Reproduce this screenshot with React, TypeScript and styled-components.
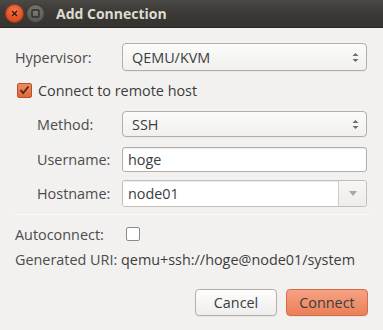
import React from 'react';
import styled, { createGlobalStyle } from 'styled-components';

const GlobalStyle = createGlobalStyle`
  html, body {
    margin: 0;
    padding: 0;
    background: #f2f1f0;
  }
  * { box-sizing: border-box; }
`;

const Window = styled.div`
  width: 383px;
  height: 330px;
  background: #f2f1f0;
  font-family: 'Open Sans', 'DejaVu Sans', sans-serif;
  font-size: 14.4px;
  color: #3c3c3c;
  overflow: hidden;
`;

const TitleBar = styled.div`
  height: 28px;
  display: flex;
  align-items: center;
  padding-left: 5px;
  gap: 2px;
  background: linear-gradient(#4a4945, #3c3b37 40%, #34332f);
  border-bottom: 1px solid #2a2925;
`;

const WinButton = styled.div<{ $close?: boolean }>`
  width: 19px;
  height: 19px;
  border-radius: 50%;
  display: flex;
  align-items: center;
  justify-content: center;
  background: ${(p) =>
    p.$close
      ? 'radial-gradient(circle at 50% 35%, #f27a51, #df4a20 70%)'
      : 'radial-gradient(circle at 50% 35%, #7e7d78, #5a5954 70%)'};
  border: 1px solid ${(p) => (p.$close ? '#a8391a' : '#3a3935')};
`;

const Title = styled.div`
  margin-left: 9px;
  font-weight: bold;
  font-size: 14px;
  color: #dfdbd2;
`;

const Content = styled.div`
  padding: 15px 15px 0 15px;
  display: flex;
  flex-direction: column;
`;

const Row = styled.div<{ $h: number; $mt?: number; $indent?: number }>`
  display: flex;
  align-items: center;
  height: ${(p) => p.$h}px;
  margin-top: ${(p) => p.$mt ?? 0}px;
  padding-left: ${(p) => p.$indent ?? 0}px;
`;

const Label = styled.div<{ $w: number }>`
  width: ${(p) => p.$w}px;
  flex-shrink: 0;
  color: #4c4c4c;
`;

const Combo = styled.div`
  flex: 1;
  height: 100%;
  margin-right: 1px;
  display: flex;
  align-items: center;
  justify-content: space-between;
  padding: 0 7px 0 9px;
  border: 1px solid #b3afa8;
  border-radius: 4px;
  background: linear-gradient(#fbfbfa, #f1f0ef);
  box-shadow: 0 1px 0 rgba(0, 0, 0, 0.04);
  color: #3c3c3c;
`;

const Entry = styled.div`
  flex: 1;
  height: 100%;
  margin-right: 1px;
  display: flex;
  align-items: center;
  padding-left: 5px;
  border: 1px solid #b3afa8;
  border-radius: 3px;
  background: #ffffff;
  box-shadow: inset 0 1px 1px rgba(0, 0, 0, 0.08);
  color: #3c3c3c;
`;

const ComboEntry = styled.div`
  flex: 1;
  height: 100%;
  margin-right: 1px;
  display: flex;
  border: 1px solid #c2beb7;
  border-radius: 3px;
  overflow: hidden;
`;

const ComboText = styled.div`
  flex: 1;
  display: flex;
  align-items: center;
  padding-left: 5px;
  background: #ffffff;
  border-right: 1px solid #d0ccc6;
  box-shadow: inset 0 1px 1px rgba(0, 0, 0, 0.08);
`;

const ComboArrow = styled.div`
  width: 27px;
  display: flex;
  align-items: center;
  justify-content: center;
  background: linear-gradient(#f7f6f5, #eeedec);
`;

const CheckBox = styled.div<{ $checked?: boolean }>`
  width: ${(p) => (p.$checked ? 15 : 14)}px;
  height: ${(p) => (p.$checked ? 15 : 14)}px;
  border-radius: 2px;
  display: flex;
  align-items: center;
  justify-content: center;
  border: 1px solid ${(p) => (p.$checked ? '#b5532f' : '#8d8a85')};
  background: ${(p) => (p.$checked ? 'linear-gradient(#f08a62, #e2663c)' : '#ffffff')};
`;

const CheckLabel = styled.div`
  margin-left: 6px;
  color: #3c3c3c;
`;

const Separator = styled.div`
  height: 1px;
  margin: 7px 0 0 -1px;
  width: 356px;
  background: #d8d5d1;
  border-bottom: 1px solid #fbfafa;
`;

const Buttons = styled.div`
  display: flex;
  justify-content: flex-end;
  gap: 9px;
  margin-top: 20px;
`;

const Button = styled.button<{ $primary?: boolean }>`
  width: 82px;
  height: 27px;
  border-radius: 4px;
  font-family: inherit;
  font-size: 14.4px;
  color: #3c3c3c;
  border: 1px solid ${(p) => (p.$primary ? '#d86a45' : '#b3afa8')};
  background: ${(p) =>
    p.$primary ? 'linear-gradient(#f6a284, #ea8058)' : 'linear-gradient(#fdfdfc, #efeeed)'};
  box-shadow: 0 1px 0 rgba(0, 0, 0, 0.05);
`;

const SpinArrows = () => (
  <svg width="7" height="11" viewBox="0 0 7 11">
    <path d="M3.5 1 L6.5 4 L0.5 4 Z" fill="#6e6c68" />
    <path d="M3.5 10 L6.5 7 L0.5 7 Z" fill="#6e6c68" />
  </svg>
);

const App = () => (
  <>
    <GlobalStyle />
    <Window>
      <TitleBar>
        <WinButton $close>
          <svg width="7" height="7" viewBox="0 0 7 7">
            <path d="M1 1 L6 6 M6 1 L1 6" stroke="#3b1a0f" strokeWidth="1.4" />
          </svg>
        </WinButton>
        <WinButton>
          <svg width="9" height="9" viewBox="0 0 9 9">
            <rect x="1" y="1" width="7" height="7" rx="1" fill="none" stroke="#2e2d2a" strokeWidth="1.4" />
          </svg>
        </WinButton>
        <Title>Add Connection</Title>
      </TitleBar>
      <Content>
        <Row $h={28}>
          <Label $w={107}>Hypervisor:</Label>
          <Combo>
            QEMU/KVM
            <SpinArrows />
          </Combo>
        </Row>
        <Row $h={20} $mt={9} $indent={2}>
          <CheckBox $checked>
            <svg width="11" height="10" viewBox="0 0 11 10">
              <path d="M1.5 5 L4.2 8 L9.5 1.5" fill="none" stroke="#4a2a1c" strokeWidth="1.8" />
            </svg>
          </CheckBox>
          <CheckLabel>Connect to remote host</CheckLabel>
        </Row>
        <Row $h={26} $mt={11} $indent={22}>
          <Label $w={85}>Method:</Label>
          <Combo>
            SSH
            <SpinArrows />
          </Combo>
        </Row>
        <Row $h={25} $mt={10} $indent={22}>
          <Label $w={85}>Username:</Label>
          <Entry>hoge</Entry>
        </Row>
        <Row $h={27} $mt={8} $indent={22}>
          <Label $w={85}>Hostname:</Label>
          <ComboEntry>
            <ComboText>node01</ComboText>
            <ComboArrow>
              <svg width="8" height="5" viewBox="0 0 8 5">
                <path d="M0 0 L8 0 L4 5 Z" fill="#a9a7a3" />
              </svg>
            </ComboArrow>
          </ComboEntry>
        </Row>
        <Separator />
        <Row $h={20} $mt={9}>
          <Label $w={111}>Autoconnect:</Label>
          <CheckBox />
        </Row>
        <Row $h={20} $mt={5}>
          <Label $w={106}>Generated URI:</Label>
          <div>qemu+ssh://hoge@node01/system</div>
        </Row>
        <Buttons>
          <Button>Cancel</Button>
          <Button $primary>Connect</Button>
        </Buttons>
      </Content>
    </Window>
  </>
);

export default App;
